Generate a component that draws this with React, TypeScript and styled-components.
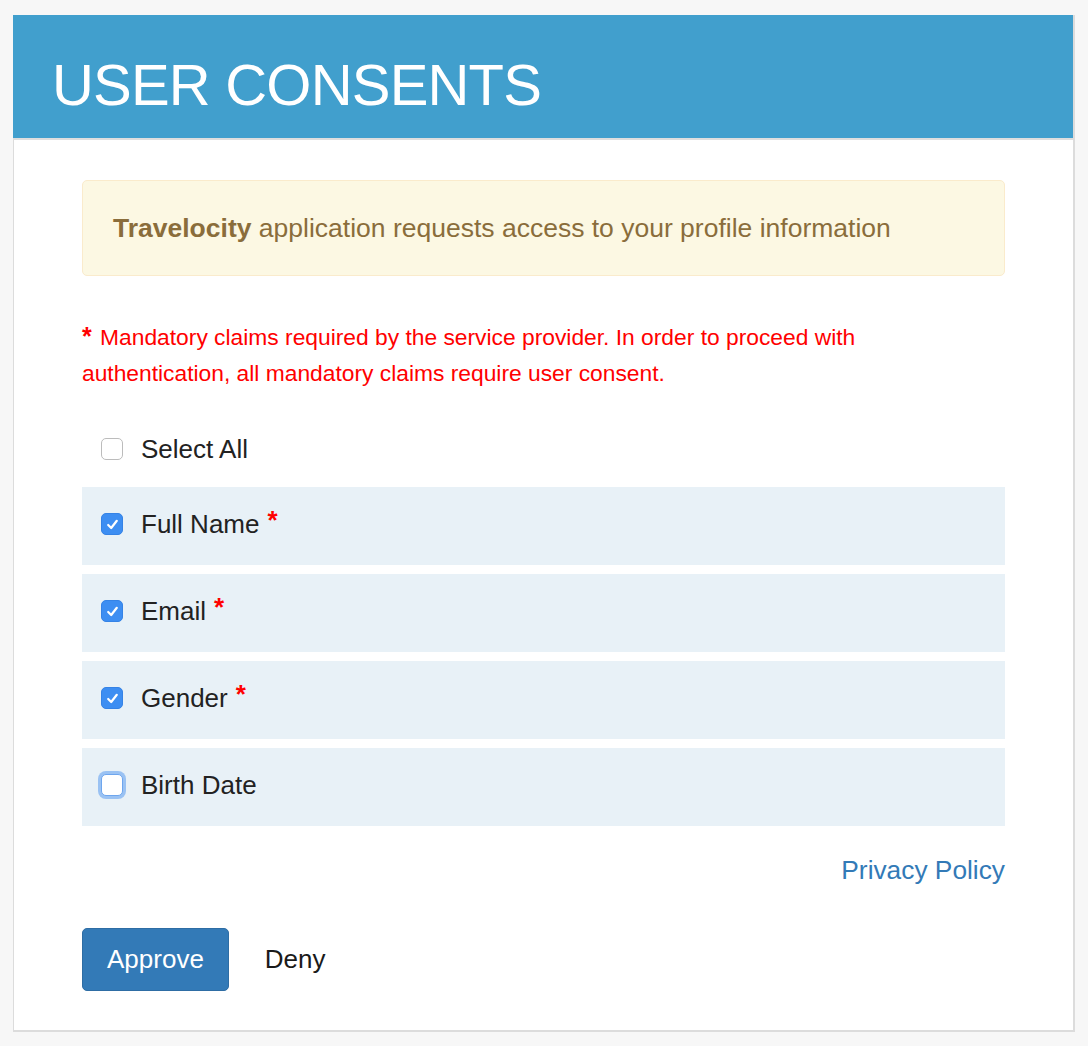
import React from "react";
import styled, { createGlobalStyle, css } from "styled-components";

const GlobalStyle = createGlobalStyle`
  html, body {
    margin: 0;
    padding: 0;
    background: #f7f7f7;
    font-family: "Liberation Sans", Arial, Helvetica, sans-serif;
    color: #222;
  }
  * { box-sizing: border-box; }
`;

const Page = styled.div`
  padding: 15px 13px 15px 13px;
`;

const Card = styled.div`
  background: #fff;
  border-left: 1px solid #dcdcdc;
  border-right: 2px solid #dcdcdc;
  border-bottom: 2px solid #dcdcdc;
`;

const Header = styled.header`
  background: #419fcd;
  margin-left: -1px;
  padding: 41px 39px 24px 39px;
  border-bottom: 2px solid #dedede;
`;

const Title = styled.h1`
  margin: 0;
  font-size: 58px;
  line-height: 58px;
  font-weight: 400;
  letter-spacing: -0.8px;
  color: #fff;
`;

const Body = styled.div`
  padding: 40px 68px 39px 68px;
  display: flex;
  flex-direction: column;
`;

const Alert = styled.div`
  background: #fcf8e3;
  border: 1px solid #faebcc;
  border-radius: 5px;
  padding: 29px 30px;
  color: #8a6d3b;
  font-size: 26.5px;
  line-height: 36px;
`;

const Strong = styled.strong`
  font-weight: 700;
`;

const Notice = styled.p`
  margin: 42px 0 40px 0;
  color: #ff0000;
  font-size: 22.8px;
  line-height: 36px;
  padding-right: 120px;
`;

const Star = styled.span`
  color: #ff0000;
  font-size: 25px;
  font-weight: 700;
  margin-right: 2px;
`;

const Row = styled.label<{ $shaded?: boolean }>`
  display: flex;
  align-items: center;
  gap: 18px;
  padding: 0 19px;
  font-size: 26px;
  line-height: 36px;
  color: #222;
  ${(p) =>
    p.$shaded
      ? css`
          background: #e8f1f7;
          height: 78px;
          padding-bottom: 4px;
        `
      : css`
          height: 36px;
        `}
`;

const List = styled.div`
  margin-top: 20px;
  display: flex;
  flex-direction: column;
  gap: 9px;
`;

const Box = styled.span<{ $checked?: boolean; $focused?: boolean }>`
  flex: none;
  width: 22px;
  height: 22px;
  border-radius: 5px;
  display: inline-flex;
  align-items: center;
  justify-content: center;
  ${(p) =>
    p.$checked
      ? css`
          background: #3d8ef2;
          border: 1px solid #3583e6;
        `
      : css`
          background: #fff;
          border: 1px solid #bcbcbc;
        `}
  ${(p) =>
    p.$focused &&
    css`
      border-color: #6ea6ee;
      box-shadow: 0 0 0 3px rgba(90, 155, 240, 0.55);
    `}
`;

const Label = styled.span`
  display: inline-flex;
  gap: 8px;
  align-items: baseline;
`;

const Req = styled.span`
  color: #ff0000;
  font-size: 26px;
  font-weight: 700;
  position: relative;
  top: -4px;
`;

const Policy = styled.a`
  align-self: flex-end;
  margin-top: 26px;
  color: #337ab7;
  font-size: 26.3px;
  line-height: 36px;
  text-decoration: none;
`;

const Actions = styled.div`
  margin-top: 40px;
  display: flex;
  gap: 11px;
  align-items: center;
`;

const Button = styled.button<{ $primary?: boolean }>`
  font-family: "Liberation Sans", Arial, Helvetica, sans-serif;
  font-size: 26px;
  line-height: 35px;
  padding: 13px 24px;
  border-radius: 5px;
  cursor: pointer;
  ${(p) =>
    p.$primary
      ? css`
          background: #337ab7;
          border: 1px solid #2e6da4;
          color: #fff;
        `
      : css`
          background: transparent;
          border: 1px solid transparent;
          color: #1a1a1a;
        `}
`;

const Check = () => (
  <svg width="13" height="13" viewBox="0 0 13 13" fill="none">
    <polyline
      points="2.2,7 5.2,10 10.8,2.8"
      stroke="#fff"
      strokeWidth="2.2"
      strokeLinecap="round"
      strokeLinejoin="round"
    />
  </svg>
);

type Claim = { name: string; checked: boolean; required: boolean; focused?: boolean };

const claims: Claim[] = [
  { name: "Full Name", checked: true, required: true },
  { name: "Email", checked: true, required: true },
  { name: "Gender", checked: true, required: true },
  { name: "Birth Date", checked: false, required: false, focused: true },
];

export default function App() {
  return (
    <>
      <GlobalStyle />
      <Page>
        <Card>
          <Header>
            <Title>USER CONSENTS</Title>
          </Header>
          <Body>
            <Alert>
              <Strong>Travelocity</Strong> application requests access to your profile information
            </Alert>
            <Notice>
              <Star>*</Star> Mandatory claims required by the service provider. In order to proceed with
              authentication, all mandatory claims require user consent.
            </Notice>
            <Row>
              <Box />
              <span>Select All</span>
            </Row>
            <List>
              {claims.map((c) => (
                <Row key={c.name} $shaded>
                  <Box $checked={c.checked} $focused={c.focused}>
                    {c.checked && <Check />}
                  </Box>
                  <Label>
                    {c.name}
                    {c.required && <Req>*</Req>}
                  </Label>
                </Row>
              ))}
            </List>
            <Policy href="#">Privacy Policy</Policy>
            <Actions>
              <Button $primary>Approve</Button>
              <Button>Deny</Button>
            </Actions>
          </Body>
        </Card>
      </Page>
    </>
  );
}
